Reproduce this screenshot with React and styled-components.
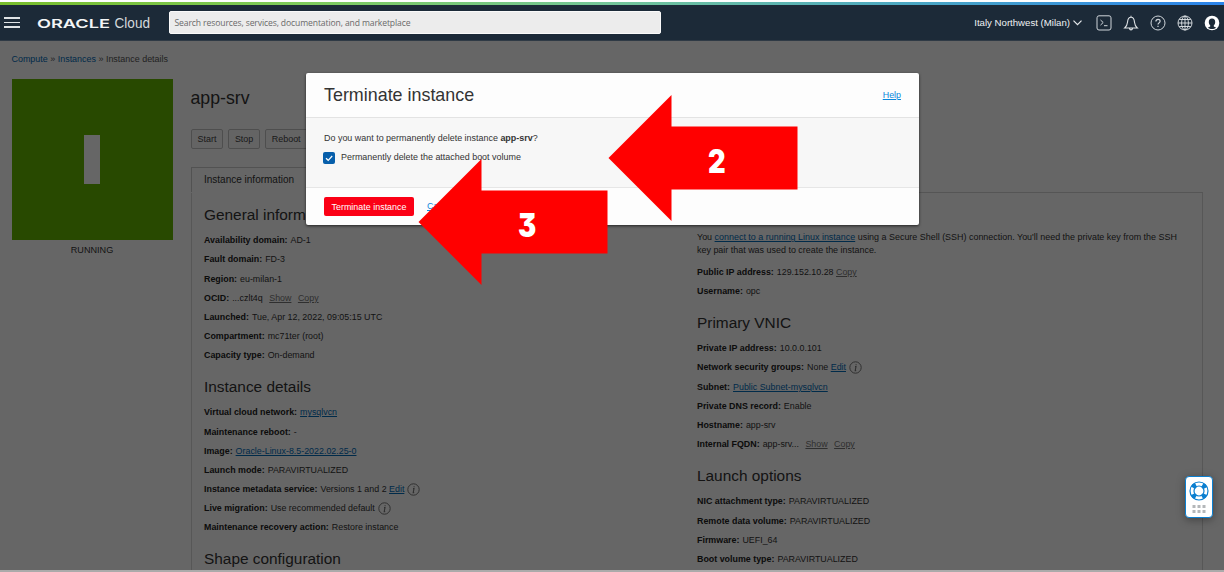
import React from "react";
import styled, { createGlobalStyle } from "styled-components";

const GlobalStyle = createGlobalStyle`
  * { box-sizing: border-box; }
  body { margin: 0; background: #fff; overflow: hidden; }
  button { font-family: inherit; }
`;

const Screen = styled.div`
  position: relative;
  display: flex;
  flex-direction: column;
  width: 1224px;
  height: 572px;
  overflow: hidden;
  background: #fff;
  color: #333;
  font: 8.9px/12.7px "Liberation Sans", Arial, sans-serif;
`;

const AccentBar = styled.div`
  flex: none;
  height: 3px;
  margin-top: 2px;
  background: linear-gradient(90deg, #78bd2c 0%, #7fcb5c 25%, #74c69a 50%, #4aa6c4 75%, #2b83ea 100%);
`;

const TopBar = styled.header`
  flex: none;
  display: flex;
  align-items: center;
  height: 36px;
  padding: 0 5px;
  background: #1c2a38;
  border-bottom: 1px solid #2f3a45;
`;

const MenuLines = styled.div`
  display: flex;
  flex-direction: column;
  gap: 3px;
  width: 16px;
  margin: 0 17px 0 -1px;
  i { height: 1.5px; background: #dfe3e6; }
`;

const Brand = styled.svg`
  width: 116px;
  height: 22px;
  margin-right: 16px;
`;

const SearchBox = styled.div`
  width: 492px;
  height: 23px;
  padding: 0 4.5px;
  background: #ececec;
  border: 1px solid #fafafa;
  border-radius: 2px;
  color: #6a6a6a;
  font: 8.6px/23px "Open Sans", sans-serif;
  letter-spacing: -0.12px;
  white-space: nowrap;
`;

const Region = styled.div`
  display: flex;
  align-items: center;
  gap: 3px;
  margin-left: auto;
  margin-right: 14px;
  color: #f0f2f4;
  font-size: 9.65px;
  line-height: 14px;
`;

const Tools = styled.div`
  display: flex;
  gap: 11px;
  margin-right: -1px;
  svg { display: block; width: 16px; height: 16px; }
`;

const Page = styled.main`
  position: relative;
  flex: 1;
  min-height: 0;
  overflow: hidden;
  padding: 12px 0 0 11.5px;
  border-bottom: 2px solid #aaa;
`;

const Shade = styled.div`
  position: absolute;
  inset: 0;
  background: rgba(0, 0, 0, 0.6);
`;

const Link = styled.a`
  color: ${(p) => (p.$bright ? "#0b86dc" : p.$muted ? "#777" : "#006bb8")};
  text-decoration: ${(p) => (p.$plain ? "none" : "underline")};
  margin-left: ${(p) => p.$gap || 0}px;
`;

const Crumbs = styled.nav`
  height: 26px;
  color: #555;
  font-size: 8.95px;
`;

const Columns = styled.div`
  display: flex;
  gap: 18px;
`;

const StatusColumn = styled.aside`
  width: 161px;
  text-align: center;
  font-size: 9.1px;
`;

const StatusTile = styled.div`
  display: flex;
  align-items: center;
  justify-content: center;
  height: 160.5px;
  margin-bottom: 4px;
  background: #64b600;
  &::before { content: ""; width: 16px; height: 49px; background: #fff; }
`;

const Details = styled.section`
  width: 1012px;
`;

const Title = styled.h1`
  margin: 0;
  padding-top: 9px;
  height: 50px;
  font-size: 17.7px;
  line-height: 20px;
  font-weight: 400;
`;

const Actions = styled.div`
  display: flex;
  gap: 4.5px;
  height: 38px;
`;

const GreyButton = styled.button`
  height: 20px;
  padding: 0 6px;
  background: #fbfbfb;
  border: 1px solid #c4c4c4;
  border-radius: 2px;
  color: #444;
  font-size: 8.95px;
`;

const Tab = styled.div`
  width: 126px;
  height: 25px;
  padding: 6px 12.5px;
  border: 1px solid #cccccc;
  border-bottom: 0;
  font-size: 10px;
  white-space: nowrap;
`;

const PanelEdge = styled.div`
  height: 1px;
  margin-left: 126px;
  background: #d4d4d4;
`;

const Panel = styled.div`
  display: flex;
  height: 440px;
  padding-left: 12.5px;
  border: 1px solid #d9d9d9;
  border-width: 0 1px;
`;

const Column = styled.div`
  width: ${(p) => p.$width}px;
  flex: none;
`;

const Heading = styled.h2`
  margin: 0;
  height: 37.9px;
  padding-top: 12px;
  font-size: 15.4px;
  line-height: 20px;
  font-weight: 400;
`;

const Row = styled.div`
  display: flex;
  align-items: center;
  gap: 3px;
  height: 19.2px;
  white-space: nowrap;
  b { color: #222; }
`;

const Note = styled.p`
  margin: 0 0 6.5px;
  width: 490px;
  font-size: 8.95px;
`;

const Dialog = styled.div`
  position: absolute;
  left: 306px;
  top: 73px;
  width: 613px;
  height: 152px;
  display: flex;
  flex-direction: column;
  background: #fdfdfd;
  border-radius: 2px;
  box-shadow: 0 1px 3px rgba(0, 0, 0, 0.65);
`;

const DialogHead = styled.div`
  display: flex;
  align-items: center;
  justify-content: space-between;
  height: 45px;
  padding: 0 18px;
  border-bottom: 1px solid #e3e3e3;
  h2 { margin: 0; font-size: 17.9px; line-height: 20px; font-weight: 400; }
`;

const DialogBody = styled.div`
  height: 70px;
  padding: 13.5px 18px;
  background: #f7f7f7;
  border-bottom: 1px solid #e6e6e6;
  font-size: 8.95px;
`;

const CheckLine = styled.label`
  display: flex;
  align-items: center;
  gap: 6px;
  margin: 7px 0 0 -1px;
  svg { width: 12px; height: 12px; }
`;

const DialogFoot = styled.div`
  display: flex;
  align-items: center;
  gap: 13px;
  flex: 1;
  padding: 0 18px;
`;

const DangerButton = styled.button`
  width: 90px;
  height: 19px;
  padding: 0;
  background: #fb0015;
  border: 0;
  border-radius: 2px;
  color: #fff;
  font-size: 8.95px;
`;

const Arrow = styled.div`
  position: absolute;
  left: ${(p) => p.$x}px;
  top: ${(p) => p.$y}px;
  display: grid;
  place-items: center;
  width: 190px;
  height: 128px;
  svg, span { grid-area: 1 / 1; }
  span {
    padding-left: 34px;
    margin-top: 8px;
    color: #fff;
    font: 900 32.5px/40px Inter, "Noto Sans", sans-serif;
    font-feature-settings: "cv09" 1;
    transform: scaleX(0.84);
  }
`;

const HelpWidget = styled.div`
  position: absolute;
  left: 1185px;
  top: 476px;
  display: flex;
  flex-direction: column;
  align-items: center;
  gap: 4px;
  width: 28px;
  height: 42px;
  padding-top: 4px;
  background: #fff;
  border: 1.5px solid #0b7fd0;
  border-radius: 4px;
  box-shadow: 0 2px 8px rgba(0, 0, 0, 0.35);
`;

const InfoIcon = () => (
  <svg width="13" height="13" viewBox="0 0 13 13" fill="none" stroke="#777">
    <circle cx="6.5" cy="6.5" r="5.7" />
    <path d="M7.1 3.3v1M6 5.6h1l-.8 4h1" strokeWidth="1.1" />
  </svg>
);

const left = [
  ["General information", [
    ["Availability domain:", "AD-1"],
    ["Fault domain:", "FD-3"],
    ["Region:", "eu-milan-1"],
    ["OCID:", <>...czlt4q <Link $muted $gap={4}>Show</Link> <Link $muted $gap={4}>Copy</Link></>],
    ["Launched:", "Tue, Apr 12, 2022, 09:05:15 UTC"],
    ["Compartment:", "mc71ter (root)"],
    ["Capacity type:", "On-demand"],
  ]],
  ["Instance details", [
    ["Virtual cloud network:", <Link>mysqlvcn</Link>],
    ["Maintenance reboot:", "-"],
    ["Image:", <Link>Oracle-Linux-8.5-2022.02.25-0</Link>],
    ["Launch mode:", "PARAVIRTUALIZED"],
    ["Instance metadata service:", <>Versions 1 and 2 <Link>Edit</Link></>, true],
    ["Live migration:", "Use recommended default", true],
    ["Maintenance recovery action:", "Restore instance"],
  ]],
  ["Shape configuration", []],
];

const access = [
  ["Public IP address:", <>129.152.10.28 <Link $muted>Copy</Link></>],
  ["Username:", "opc"],
];

const right = [
  ["Primary VNIC", [
    ["Private IP address:", "10.0.0.101"],
    ["Network security groups:", <>None <Link>Edit</Link></>, true],
    ["Subnet:", <Link>Public Subnet-mysqlvcn</Link>],
    ["Private DNS record:", "Enable"],
    ["Hostname:", "app-srv"],
    ["Internal FQDN:", <>app-srv... <Link $muted $gap={4}>Show</Link> <Link $muted $gap={4}>Copy</Link></>],
  ]],
  ["Launch options", [
    ["NIC attachment type:", "PARAVIRTUALIZED"],
    ["Remote data volume:", "PARAVIRTUALIZED"],
    ["Firmware:", "UEFI_64"],
    ["Boot volume type:", "PARAVIRTUALIZED"],
  ]],
];

const Rows = ({ items }) =>
  items.map(([label, value, info]) => (
    <Row key={label}>
      <b>{label}</b>
      <span>{value}</span>
      {info && <InfoIcon />}
    </Row>
  ));

const Sections = ({ groups }) =>
  groups.map(([title, items]) => (
    <React.Fragment key={title}>
      <Heading>{title}</Heading>
      <Rows items={items} />
    </React.Fragment>
  ));

const Callout = ({ x, y, label }) => (
  <Arrow $x={x} $y={y}>
    <svg width="190" height="128" viewBox="0 0 190 128">
      <path d="M.5 64 63.5 1v31.500H189.500v63H63.500V127Z" fill="#f00" />
    </svg>
    <span>{label}</span>
  </Arrow>
);

export default function App() {
  return (
    <Screen>
      <GlobalStyle />
      <AccentBar />
      <TopBar>
        <MenuLines><i /><i /><i /></MenuLines>
        <Brand viewBox="0 0 116 22" fill="#f3f5f6">
          <text x="0" y="15.5" fontFamily="Inter, sans-serif" fontWeight="600" fontSize="12.4" textLength="73" lengthAdjust="spacingAndGlyphs">ORACLE</text>
          <text x="77.5" y="15.5" fontFamily="Liberation Sans, sans-serif" fontSize="14.2" textLength="35.5" lengthAdjust="spacingAndGlyphs" fill="#d4d9dd">Cloud</text>
        </Brand>
        <SearchBox>Search resources, services, documentation, and marketplace</SearchBox>
        <Region>
          Italy Northwest (Milan)
          <svg width="9" height="6" viewBox="0 0 9 6" fill="none" stroke="#e6e9ec" strokeWidth="1.2"><path d="m.5.7 4 4 4-4" /></svg>
        </Region>
        <Tools>
          <svg viewBox="0 0 16 16" fill="none" stroke="#cfd5da"><rect x="1" y=".8" width="14" height="14.2" rx="2" /><path d="m4.5 5 2.7 2.5-2.7 2.6M8 10.7h3.5" /></svg>
          <svg viewBox="0 0 16 16" fill="none" stroke="#dfe3e6" strokeWidth="1.1"><path d="M8 .8v1.5M1.700 13h12.600c-1.900-1.700-2.500-2.800-2.800-5.800C11.200 4 10 2.300 8 2.300S4.800 4 4.500 7.200c-.3 3-.9 4.100-2.800 5.800ZM6.500 13.400c.2 1.900 2.800 1.900 3 0" /></svg>
          <svg viewBox="0 0 16 16" fill="none" stroke="#cfd5da"><circle cx="8" cy="8" r="7" /><path d="M5.900 6.400c.1-2.900 4.300-2.700 4.200-.2 0 1.600-2.100 1.700-2.100 3.300M8 10.700v1.300" strokeWidth="1.2" /></svg>
          <svg viewBox="0 0 16 16" fill="none" stroke="#dfe3e6" strokeWidth=".9"><circle cx="8" cy="8" r="7" /><ellipse cx="8" cy="8" rx="3.4" ry="7" /><path d="M8 1v14M1 8h14M2.200 4.500h11.600M2.200 11.500h11.600" /></svg>
          <svg viewBox="0 0 16 16"><circle cx="8" cy="8" r="7.3" fill="#fff" /><path d="M8 3.500c2.200 0 3.200 1.500 3.200 3.400 0 1.500-.6 2.700-1.400 3.400v1.200l2.400 1.200c-2.400 1.700-6 1.700-8.400 0l2.400-1.200v-1.200C5.400 9.600 4.800 8.400 4.800 6.900c0-1.900 1-3.400 3.200-3.400Z" fill="#1c2a38" /></svg>
        </Tools>
      </TopBar>
      <Page>
        <Crumbs><Link $plain>Compute</Link> » <Link $plain>Instances</Link> » Instance details</Crumbs>
        <Columns>
          <StatusColumn>
            <StatusTile />
            RUNNING
          </StatusColumn>
          <Details>
            <Title>app-srv</Title>
            <Actions>
              <GreyButton>Start</GreyButton>
              <GreyButton>Stop</GreyButton>
              <GreyButton>Reboot</GreyButton>
            </Actions>
            <Tab>Instance information</Tab>
            <PanelEdge />
            <Panel>
              <Column $width={493}><Sections groups={left} /></Column>
              <Column $width={500}>
                <Heading>Instance access</Heading>
                <Note>
                  You <Link>connect to a running Linux instance</Link> using a Secure Shell (SSH) connection. You'll need the private key from the SSH key pair that was used to create the instance.
                </Note>
                <Rows items={access} />
                <Sections groups={right} />
              </Column>
            </Panel>
          </Details>
        </Columns>
        <Shade />
      </Page>
      <Dialog>
        <DialogHead>
          <h2>Terminate instance</h2>
          <Link $bright>Help</Link>
        </DialogHead>
        <DialogBody>
          <div>Do you want to permanently delete instance <b>app-srv</b>?</div>
          <CheckLine>
            <svg viewBox="0 0 12 12"><rect width="12" height="12" rx="2" fill="#075fab" /><path d="m3 6.200 2.200 2.100L9.200 4" fill="none" stroke="#fff" strokeWidth="1.2" /></svg>
            Permanently delete the attached boot volume
          </CheckLine>
        </DialogBody>
        <DialogFoot>
          <DangerButton>Terminate instance</DangerButton>
          <Link $bright>Cancel</Link>
        </DialogFoot>
      </Dialog>
      <Callout x={607.5} y={94} label="2" />
      <Callout x={417.5} y={158} label="3" />
      <HelpWidget>
        <svg width="20" height="20" viewBox="0 0 20 20" fill="none" stroke="#0b7fd0">
          <circle cx="10" cy="10" r="7" strokeWidth="4.5" strokeDasharray="4.2 6.796" strokeDashoffset="-3.4" />
          <circle cx="10" cy="10" r="9" strokeWidth="1.2" />
          <circle cx="10" cy="10" r="5" strokeWidth="1.2" />
        </svg>
        <svg width="14" height="9" viewBox="0 0 14 9" fill="#b4b7ba">
          <path d="M.5 0h3v3h-3zM5.500 0h3v3h-3zM10.500 0h3v3h-3zM.5 5h3v3h-3zM5.500 5h3v3h-3zM10.500 5h3v3h-3z" />
        </svg>
      </HelpWidget>
    </Screen>
  );
}
